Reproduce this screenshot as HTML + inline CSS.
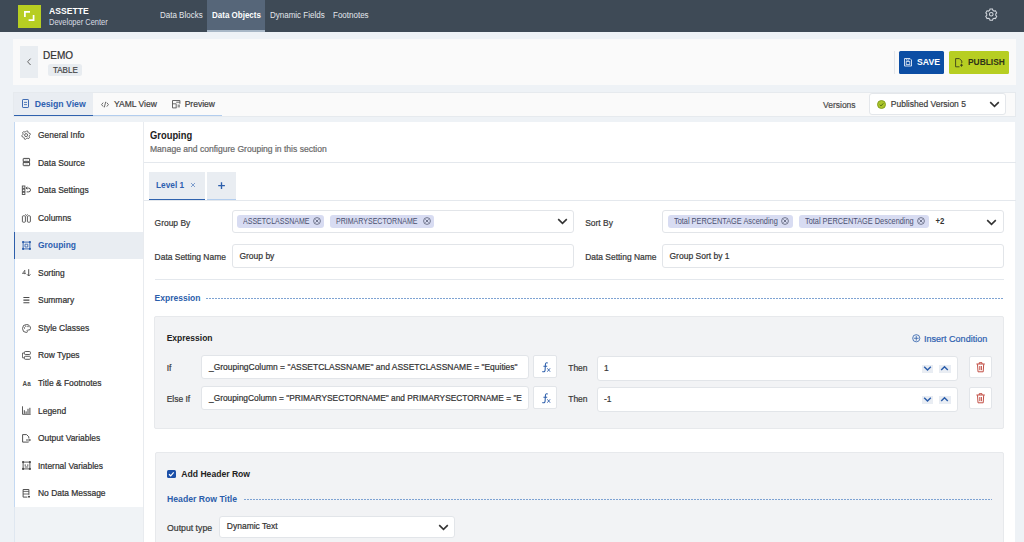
<!DOCTYPE html>
<html><head><meta charset="utf-8">
<style>
*{box-sizing:border-box;margin:0;padding:0}
html,body{width:1024px;height:542px;overflow:hidden;background:#eef2f6;font-family:"Liberation Sans",sans-serif;color:#333}
.a{position:absolute}
.t{position:absolute;white-space:nowrap;line-height:1;-webkit-text-stroke:0.2px currentColor}
svg{position:absolute;overflow:visible}
</style></head><body>
<div class="a" style="left:0px;top:0px;width:1024px;height:32px;background:#3e4a56"></div>
<div class="a" style="left:18px;top:5px;width:23px;height:22.5px;background:#b7ce22"></div>
<svg style="left:0px;top:0px" width="60" height="32"><path d="M24.9 17V11.9H30M28.6 20.2H33.6V15" fill="none" stroke="#fff" stroke-width="1.7"/></svg>
<div class="t" style="left:49px;top:7.00px;font-size:8.6px;color:#fff;font-weight:bold;-webkit-text-stroke:0;transform:scaleY(1.09);transform-origin:0 7.28px;">ASSETTE</div>
<div class="t" style="left:49px;top:19.00px;font-size:7.5px;color:#d9dde3;transform:scaleY(1.09);transform-origin:0 6.35px;-webkit-text-stroke:0;">Developer Center</div>
<div class="a" style="left:207px;top:0px;width:58px;height:32px;background:#566679;border-bottom:2px solid #a8b7c6"></div>
<div class="t" style="left:160px;top:12.00px;font-size:8px;color:#e4e8ec;transform:scaleY(1.14);transform-origin:0 6.77px;-webkit-text-stroke:0;">Data Blocks</div>
<div class="t" style="left:212px;top:12.00px;font-size:8px;color:#fff;font-weight:bold;-webkit-text-stroke:0;transform:scaleY(1.14);transform-origin:0 6.77px;">Data Objects</div>
<div class="t" style="left:270px;top:12.00px;font-size:8px;color:#e4e8ec;transform:scaleY(1.14);transform-origin:0 6.77px;-webkit-text-stroke:0;">Dynamic Fields</div>
<div class="t" style="left:333px;top:12.00px;font-size:8px;color:#e4e8ec;transform:scaleY(1.14);transform-origin:0 6.77px;-webkit-text-stroke:0;">Footnotes</div>
<svg style="left:985px;top:8px" width="12.5" height="12.5" viewBox="0 0 24 24"><path d="M9.6 2h4.8l.8 2.6 2.3 1.3 2.6-.6 2.4 4.2-1.9 2v2.6l1.9 2-2.4 4.2-2.6-.6-2.3 1.3-.8 2.6H9.6l-.8-2.6-2.3-1.3-2.6.6-2.4-4.2 1.9-2v-2.6l-1.9-2 2.4-4.2 2.6.6 2.3-1.3z" fill="none" stroke="#d3d8de" stroke-width="2"/><circle cx="12" cy="12" r="3.5" fill="none" stroke="#d3d8de" stroke-width="2"/></svg>
<div class="a" style="left:13px;top:39px;width:1003px;height:46px;background:#fafafa"></div>
<div class="a" style="left:20px;top:46px;width:18px;height:32px;background:#e9edf1"></div>
<svg style="left:20px;top:46px" width="18" height="32"><path d="M10.6 12.6L7.6 15.8 10.6 19" fill="none" stroke="#666" stroke-width="1"/></svg>
<div class="t" style="left:43px;top:51.00px;font-size:10px;color:#333;transform:scaleY(1.09);transform-origin:0 8.46px;">DEMO</div>
<div class="a" style="left:48px;top:64px;width:34px;height:12px;background:#e8ecf0;border-radius:2.5px"></div>
<div class="t" style="left:52.6px;top:66.00px;font-size:8.6px;color:#444;transform:scaleY(1.09) scaleX(0.93);transform-origin:0 7.28px;">TABLE</div>
<div class="a" style="left:893.5px;top:51px;width:1px;height:23px;background:#e3e6ea"></div>
<div class="a" style="left:899px;top:51px;width:45px;height:23px;background:#0c4ea4;border-radius:1.5px"></div>
<svg style="left:903.5px;top:58px" width="8" height="8.5"><path d="M0.5 0.5H6L7.5 2V8H0.5Z" fill="none" stroke="#e4ebf6" stroke-width="0.9"/><rect x="2.2" y="3.6" width="3.6" height="2.8" fill="none" stroke="#e4ebf6" stroke-width="0.8"/><path d="M2.4 0.8V2.2H5V0.8" fill="none" stroke="#e4ebf6" stroke-width="0.7"/></svg>
<div class="t" style="left:917px;top:58.00px;font-size:8.7px;color:#fff;font-weight:bold;-webkit-text-stroke:0;transform:scaleY(1.09);transform-origin:0 7.36px;">SAVE</div>
<div class="a" style="left:949px;top:51px;width:60px;height:23px;background:#b7ce22;border-radius:1.5px"></div>
<svg style="left:955px;top:57.5px" width="8" height="9.5"><path d="M4.5 8.8H0.6V0.6H4.4L6.8 3V5" fill="none" stroke="#3b401c" stroke-width="0.9"/><path d="M5 7.2H8M6.5 5.7V8.7" stroke="#3b401c" stroke-width="0.9"/></svg>
<div class="t" style="left:968px;top:58.00px;font-size:8.4px;color:#2f3318;font-weight:bold;-webkit-text-stroke:0;transform:scaleY(1.09);transform-origin:0 7.11px;">PUBLISH</div>
<div class="a" style="left:13px;top:92px;width:1002.5px;height:24.5px;background:#fafafa;border:1px solid #e6eaee"></div>
<div class="a" style="left:14px;top:93px;width:79px;height:23px;background:#e9edf2;border-bottom:1.5px solid #2f62ae"></div>
<div class="a" style="left:93px;top:114.6px;width:129px;height:1.2px;background:#b2cdee"></div>
<svg style="left:22px;top:98.5px" width="7" height="9"><rect x="0.5" y="0.5" width="6" height="8" rx="0.6" fill="none" stroke="#2c5eab" stroke-width="0.9"/><path d="M2 3.4H5M2 5.6H5" stroke="#2c5eab" stroke-width="0.8"/></svg>
<div class="t" style="left:34.7px;top:100.00px;font-size:8.7px;color:#2d60b0;font-weight:bold;-webkit-text-stroke:0;transform:scaleY(1.09);transform-origin:0 7.36px;">Design View</div>
<svg style="left:100.5px;top:100.5px" width="8" height="7"><path d="M2.2 1.6L0.6 3.6 2.2 5.6M5.8 1.6L7.4 3.6 5.8 5.6M4.7 0.8L3.3 6.4" fill="none" stroke="#555" stroke-width="0.85"/></svg>
<div class="t" style="left:114px;top:100.00px;font-size:8.5px;color:#3d3d3d;transform:scaleY(1.09);transform-origin:0 7.20px;">YAML View</div>
<svg style="left:171.8px;top:99.8px" width="8.5" height="8.5"><path d="M4.5 7.9H0.5V0.5H7.9V3.8" fill="none" stroke="#555" stroke-width="0.9"/><path d="M0.5 3.8H4.2V7.9M4.2 2.2H7.9M5.6 5.2H8M5.6 6.8H8" fill="none" stroke="#555" stroke-width="0.85"/></svg>
<div class="t" style="left:184.7px;top:100.00px;font-size:8.5px;color:#3d3d3d;transform:scaleY(1.09);transform-origin:0 7.20px;">Preview</div>
<div class="t" style="left:823px;top:101.00px;font-size:8.5px;color:#4a4a4a;transform:scaleY(1.09);transform-origin:0 7.20px;">Versions</div>
<div class="a" style="left:869px;top:93px;width:137px;height:22.4px;background:#fff;border:1px solid #e4e7eb;border-radius:3px"></div>
<svg style="left:876.8px;top:99.8px" width="9" height="9"><circle cx="4.5" cy="4.5" r="4" fill="#abc52a" stroke="#7f9a1a" stroke-width="0.9"/><path d="M2.8 4.7L4 5.9 6.3 3.4" fill="none" stroke="#4a6212" stroke-width="0.9"/></svg>
<div class="t" style="left:890.8px;top:100.00px;font-size:8.5px;color:#3d3d3d;transform:scaleY(1.09);transform-origin:0 7.20px;">Published Version 5</div>
<svg style="left:988.6px;top:100.8px" width="11" height="7"><path d="M1.2 1.2L5.5 5.3 9.8 1.2" fill="none" stroke="#333" stroke-width="1.6"/></svg>
<div class="a" style="left:14px;top:507px;width:128.5px;height:35px;background:#f0f3f6;border-left:1px solid #dfe7f0"></div>
<div class="a" style="left:14px;top:121.5px;width:128.5px;height:385.5px;background:#fff;border-left:1px solid #c4d9f2"></div>
<svg style="left:22px;top:130.8px" width="9" height="9"><path d="M4.66 -0.16 L5.75 0.13 L6.11 1.48 L6.72 2.09 L8.07 2.45 L8.36 3.54 L7.37 4.53 L7.15 5.36 L7.51 6.72 L6.72 7.51 L5.36 7.15 L4.53 7.37 L3.54 8.36 L2.45 8.07 L2.09 6.72 L1.48 6.11 L0.13 5.75 L-0.16 4.66 L0.83 3.67 L1.05 2.84 L0.69 1.48 L1.48 0.69 L2.84 1.05 L3.67 0.83Z" fill="none" stroke="#4a4a4a" stroke-width="0.85" stroke-linejoin="round"/><circle cx="4.1" cy="4.1" r="1.5" fill="none" stroke="#4a4a4a" stroke-width="0.85"/></svg>
<div class="t" style="left:38px;top:131.00px;font-size:8.45px;color:#303030;transform:scaleY(1.09);transform-origin:0 7.15px;">General Info</div>
<svg style="left:22px;top:158.4px" width="9" height="9"><rect x="1.2" y="0.4" width="6.4" height="3.3" rx="0.5" fill="none" stroke="#4a4a4a" stroke-width="1"/><rect x="1.2" y="4.4" width="6.4" height="3.3" rx="0.5" fill="none" stroke="#4a4a4a" stroke-width="1"/><path d="M1.6 3.4V4.7M7.2 3.4V4.7" stroke="#4a4a4a" stroke-width="1.3"/><path d="M2.6 2.1H6.2M2.6 6H6.2" stroke="#4a4a4a" stroke-width="0.6" opacity="0.6"/></svg>
<div class="t" style="left:38px;top:159.00px;font-size:8.45px;color:#303030;transform:scaleY(1.09);transform-origin:0 7.15px;">Data Source</div>
<svg style="left:22px;top:185.9px" width="9" height="9"><rect x="0.3" y="0" width="2.6" height="2.3" fill="none" stroke="#4a4a4a" stroke-width="0.9"/><rect x="0.3" y="3.1" width="2.6" height="2.3" fill="none" stroke="#4a4a4a" stroke-width="0.9"/><rect x="0.3" y="6.2" width="2.6" height="2.3" fill="none" stroke="#4a4a4a" stroke-width="0.9"/><path d="M4.4 2.1H6.6A1.9 1.9 0 0 1 6.6 5.9H4.6" fill="none" stroke="#4a4a4a" stroke-width="0.95"/><path d="M5.3 0.9L4 2.1 5.3 3.3" fill="none" stroke="#4a4a4a" stroke-width="0.95"/></svg>
<div class="t" style="left:38px;top:186.00px;font-size:8.45px;color:#303030;transform:scaleY(1.09);transform-origin:0 7.15px;">Data Settings</div>
<svg style="left:22px;top:213.5px" width="9" height="9"><rect x="0.4" y="1.8" width="3" height="6.4" rx="0.8" fill="none" stroke="#4a4a4a" stroke-width="0.9"/><rect x="5.4" y="1.8" width="3" height="6.4" rx="0.8" fill="none" stroke="#4a4a4a" stroke-width="0.9"/><path d="M3.2 0.4L4.4 1.5 5.6 0.4" fill="none" stroke="#4a4a4a" stroke-width="0.9"/></svg>
<div class="t" style="left:38px;top:214.00px;font-size:8.45px;color:#303030;transform:scaleY(1.09);transform-origin:0 7.15px;">Columns</div>
<div class="a" style="left:14px;top:232px;width:128.5px;height:26.8px;background:#e9edf2;border-left:1.5px solid #2c5eab"></div>
<svg style="left:22px;top:241.0px" width="9" height="9"><rect x="1.1" y="1.1" width="6.8" height="6.8" fill="none" stroke="#2c5eab" stroke-width="0.9"/><circle cx="1.1" cy="1.1" r="1.1" fill="#2c5eab"/><circle cx="7.9" cy="1.1" r="1.1" fill="#2c5eab"/><circle cx="1.1" cy="7.9" r="1.1" fill="#2c5eab"/><circle cx="7.9" cy="7.9" r="1.1" fill="#2c5eab"/><path d="M3 3.2H5.8V6H3Z" fill="none" stroke="#2c5eab" stroke-width="0.8"/></svg>
<div class="t" style="left:38px;top:241.00px;font-size:8.45px;color:#2d60b0;font-weight:bold;-webkit-text-stroke:0;transform:scaleY(1.09);transform-origin:0 7.15px;">Grouping</div>
<svg style="left:22px;top:268.6px" width="9" height="9"><path d="M6.7 0.2V6.8M5 5.3L6.7 7 8.4 5.3" fill="none" stroke="#4a4a4a" stroke-width="0.95"/><path d="M0.5 4.6L2.8 1.2V5.2M0.5 4.4H3.9" fill="none" stroke="#4a4a4a" stroke-width="0.75"/></svg>
<div class="t" style="left:38px;top:269.00px;font-size:8.45px;color:#303030;transform:scaleY(1.09);transform-origin:0 7.15px;">Sorting</div>
<svg style="left:22px;top:296.1px" width="9" height="9"><path d="M1.4 1.5H7.4M1.4 4.1H7.4M1.4 6.7H7.4" stroke="#4a4a4a" stroke-width="1.05"/></svg>
<div class="t" style="left:38px;top:296.00px;font-size:8.45px;color:#303030;transform:scaleY(1.09);transform-origin:0 7.15px;">Summary</div>
<svg style="left:22px;top:323.7px" width="9" height="9"><path d="M4.5 0.5a4 4 0 1 0 0 8c.8 0 1.1-.6.7-1.2-.4-.6 0-1.3.7-1.3h1a1.6 1.6 0 0 0 1.6-1.6A4 3.8 0 0 0 4.5 0.5z" fill="none" stroke="#4a4a4a" stroke-width="0.9"/><circle cx="2.5" cy="4" r="0.65" fill="#4a4a4a"/><circle cx="3.8" cy="2.2" r="0.65" fill="#4a4a4a"/><circle cx="6" cy="2.5" r="0.65" fill="#4a4a4a"/></svg>
<div class="t" style="left:38px;top:324.00px;font-size:8.45px;color:#303030;transform:scaleY(1.09);transform-origin:0 7.15px;">Style Classes</div>
<svg style="left:22px;top:351.2px" width="9" height="9"><rect x="2.4" y="0.5" width="6" height="3" rx="0.9" fill="none" stroke="#4a4a4a" stroke-width="0.9"/><rect x="2.4" y="5.3" width="6" height="3" rx="0.9" fill="none" stroke="#4a4a4a" stroke-width="0.9"/><path d="M0.5 2H2.4M0.5 2V6.8H2.4" fill="none" stroke="#4a4a4a" stroke-width="0.8"/></svg>
<div class="t" style="left:38px;top:351.00px;font-size:8.45px;color:#303030;transform:scaleY(1.09);transform-origin:0 7.15px;">Row Types</div>
<svg style="left:22px;top:378.8px" width="9" height="9"><text x="0.6" y="7" font-family="Liberation Sans" font-size="6.3" font-weight="bold" fill="#4a4a4a">Aa</text></svg>
<div class="t" style="left:38px;top:379.00px;font-size:8.45px;color:#303030;transform:scaleY(1.09);transform-origin:0 7.15px;">Title &amp; Footnotes</div>
<svg style="left:22px;top:406.3px" width="9" height="9"><path d="M0.5 0.3V8.3H8.7" fill="none" stroke="#4a4a4a" stroke-width="0.9"/><path d="M2.3 7.8V4.2M4.1 7.8V5.4M6 7.8V2.8M7.9 7.8V1.8" stroke="#4a4a4a" stroke-width="1"/></svg>
<div class="t" style="left:38px;top:407.00px;font-size:8.45px;color:#303030;transform:scaleY(1.09);transform-origin:0 7.15px;">Legend</div>
<svg style="left:22px;top:433.9px" width="9" height="9"><path d="M6.6 8.1H0.6V0.6H4.6L6.8 2.8V4.2" fill="none" stroke="#4a4a4a" stroke-width="0.95"/><path d="M4 6H8.4M7 4.6L8.4 6 7 7.4" fill="none" stroke="#4a4a4a" stroke-width="0.9"/></svg>
<div class="t" style="left:38px;top:434.00px;font-size:8.45px;color:#303030;transform:scaleY(1.09);transform-origin:0 7.15px;">Output Variables</div>
<svg style="left:22px;top:461.4px" width="9" height="9"><rect x="1.1" y="1.1" width="6.8" height="6.8" fill="none" stroke="#4a4a4a" stroke-width="0.9"/><circle cx="1.1" cy="1.1" r="1.1" fill="#4a4a4a"/><circle cx="7.9" cy="1.1" r="1.1" fill="#4a4a4a"/><circle cx="1.1" cy="7.9" r="1.1" fill="#4a4a4a"/><circle cx="7.9" cy="7.9" r="1.1" fill="#4a4a4a"/><path d="M3.2 3.3V5.2M5.8 3.3V5.2M2.8 6H6.2" stroke="#4a4a4a" stroke-width="0.85"/></svg>
<div class="t" style="left:38px;top:462.00px;font-size:8.45px;color:#303030;transform:scaleY(1.09);transform-origin:0 7.15px;">Internal Variables</div>
<svg style="left:22px;top:489.0px" width="9" height="9"><path d="M6.9 5.8V0.5H1.1V8.1H5.4" fill="none" stroke="#4a4a4a" stroke-width="0.95"/><path d="M1.1 2.4H6.9M1.1 5H6.9" stroke="#4a4a4a" stroke-width="0.8"/><rect x="6" y="6.9" width="2" height="1.6" fill="#4a4a4a"/></svg>
<div class="t" style="left:38px;top:489.00px;font-size:8.45px;color:#303030;transform:scaleY(1.09);transform-origin:0 7.15px;">No Data Message</div>
<div class="a" style="left:142.5px;top:122px;width:872.5px;height:420px;background:#fff;border-left:1px solid #e8ebef"></div>
<div class="t" style="left:150px;top:131.00px;font-size:9.4px;color:#222;font-weight:bold;-webkit-text-stroke:0;transform:scaleY(1.09);transform-origin:0 7.96px;">Grouping</div>
<div class="t" style="left:150px;top:145.00px;font-size:8.56px;color:#6a6a6a;transform:scaleY(1.09);transform-origin:0 7.25px;">Manage and configure Grouping in this section</div>
<div class="a" style="left:143.5px;top:162px;width:872px;height:1px;background:#e4e8ed"></div>
<div class="a" style="left:149px;top:171.5px;width:55.5px;height:28.8px;background:#e9edf2;border-bottom:1.5px solid #2f62ae"></div>
<div class="t" style="left:156px;top:181.00px;font-size:8.3px;color:#2d60b0;font-weight:bold;-webkit-text-stroke:0;transform:scaleY(1.09);transform-origin:0 7.03px;">Level 1</div>
<svg style="left:189.5px;top:182.3px" width="6" height="6"><path d="M1 1L5 5M5 1L1 5" stroke="#6b8fc6" stroke-width="0.85"/></svg>
<div class="a" style="left:207px;top:171.5px;width:28.5px;height:28.8px;background:#e9edf2;border-bottom:1.3px solid #b2cdee"></div>
<svg style="left:217px;top:181.2px" width="9" height="9"><path d="M4.5 1.2V7.9M1.2 4.6H7.9" stroke="#2c5eab" stroke-width="1.35"/></svg>
<div class="a" style="left:143.5px;top:200px;width:872px;height:1px;background:#e4e8ed"></div>
<div class="t" style="left:154.6px;top:219.00px;font-size:8.45px;color:#383838;transform:scaleY(1.09);transform-origin:0 7.15px;">Group By</div>
<div class="a" style="left:232px;top:210px;width:342px;height:23px;background:#fff;border:1px solid #e2e5e9;border-radius:3px"></div>
<div class="a" style="left:237.3px;top:215px;width:86.6px;height:12.8px;background:#d8dcf2;border-radius:3px"></div>
<div class="t" style="left:243.3px;top:218.00px;font-size:8px;color:#4a5070;transform:scaleY(1.09) scaleX(0.88);transform-origin:0 6.77px;-webkit-text-stroke:0;">ASSETCLASSNAME</div>
<svg style="left:313.3px;top:217.2px" width="8" height="8"><circle cx="4" cy="4" r="3.4" fill="none" stroke="#50556e" stroke-width="0.75"/><path d="M2.4 2.4L5.6 5.6M5.6 2.4L2.4 5.6" stroke="#50556e" stroke-width="0.75"/></svg>
<div class="a" style="left:330.1px;top:215px;width:103.5px;height:12.8px;background:#d8dcf2;border-radius:3px"></div>
<div class="t" style="left:336.3px;top:218.00px;font-size:8px;color:#4a5070;transform:scaleY(1.09) scaleX(0.88);transform-origin:0 6.77px;-webkit-text-stroke:0;">PRIMARYSECTORNAME</div>
<svg style="left:422.6px;top:217.2px" width="8" height="8"><circle cx="4" cy="4" r="3.4" fill="none" stroke="#50556e" stroke-width="0.75"/><path d="M2.4 2.4L5.6 5.6M5.6 2.4L2.4 5.6" stroke="#50556e" stroke-width="0.75"/></svg>
<svg style="left:556.5px;top:218.3px" width="11" height="7"><path d="M1.2 1.2L5.5 5.3 9.8 1.2" fill="none" stroke="#333" stroke-width="1.6"/></svg>
<div class="t" style="left:585.2px;top:219.00px;font-size:8.45px;color:#383838;transform:scaleY(1.09);transform-origin:0 7.15px;">Sort By</div>
<div class="a" style="left:662px;top:210px;width:342px;height:23px;background:#fff;border:1px solid #e2e5e9;border-radius:3px"></div>
<div class="a" style="left:667.9px;top:215px;width:124.8px;height:12.8px;background:#d8dcf2;border-radius:3px"></div>
<div class="t" style="left:673.8px;top:218.00px;font-size:8px;color:#4a5070;transform:scaleY(1.09) scaleX(0.92);transform-origin:0 6.77px;-webkit-text-stroke:0;">Total PERCENTAGE Ascending</div>
<svg style="left:781.3px;top:217.2px" width="8" height="8"><circle cx="4" cy="4" r="3.4" fill="none" stroke="#50556e" stroke-width="0.75"/><path d="M2.4 2.4L5.6 5.6M5.6 2.4L2.4 5.6" stroke="#50556e" stroke-width="0.75"/></svg>
<div class="a" style="left:799.2px;top:215px;width:129.5px;height:12.8px;background:#d8dcf2;border-radius:3px"></div>
<div class="t" style="left:805px;top:218.00px;font-size:8px;color:#4a5070;transform:scaleY(1.09) scaleX(0.92);transform-origin:0 6.77px;-webkit-text-stroke:0;">Total PERCENTAGE Descending</div>
<svg style="left:917.3px;top:217.2px" width="8" height="8"><circle cx="4" cy="4" r="3.4" fill="none" stroke="#50556e" stroke-width="0.75"/><path d="M2.4 2.4L5.6 5.6M5.6 2.4L2.4 5.6" stroke="#50556e" stroke-width="0.75"/></svg>
<div class="t" style="left:935.4px;top:218.00px;font-size:7.8px;color:#333;font-weight:bold;-webkit-text-stroke:0;transform:scaleY(1.09);transform-origin:0 6.60px;">+2</div>
<svg style="left:986px;top:218.5px" width="11" height="7"><path d="M1.2 1.2L5.5 5.3 9.8 1.2" fill="none" stroke="#333" stroke-width="1.6"/></svg>
<div class="t" style="left:154.6px;top:253.00px;font-size:8.45px;color:#383838;transform:scaleY(1.09);transform-origin:0 7.15px;">Data Setting Name</div>
<div class="a" style="left:232px;top:244px;width:342px;height:23.5px;background:#fff;border:1px solid #e2e5e9;border-radius:3px"></div>
<div class="t" style="left:239.4px;top:252.00px;font-size:8.5px;color:#333;transform:scaleY(1.09);transform-origin:0 7.20px;">Group by</div>
<div class="t" style="left:585.2px;top:253.00px;font-size:8.45px;color:#383838;transform:scaleY(1.09);transform-origin:0 7.15px;">Data Setting Name</div>
<div class="a" style="left:662px;top:244px;width:342px;height:23.5px;background:#fff;border:1px solid #e2e5e9;border-radius:3px"></div>
<div class="t" style="left:669.5px;top:252.00px;font-size:8.5px;color:#333;transform:scaleY(1.09);transform-origin:0 7.20px;">Group Sort by 1</div>
<div class="a" style="left:154.6px;top:279px;width:849px;height:1px;background:#e4e8ed"></div>
<div class="t" style="left:154.6px;top:294.00px;font-size:8.5px;color:#2c5eab;font-weight:bold;-webkit-text-stroke:0;transform:scaleY(1.09);transform-origin:0 7.20px;">Expression</div>
<div class="a" style="left:206px;top:298px;width:797.5px;height:1px;background:repeating-linear-gradient(90deg,#7ea3d3 0 2px,transparent 2px 3px)"></div>
<div class="a" style="left:154.3px;top:316px;width:849.3px;height:113.3px;background:#f2f3f5;border:1px solid #e7e9ec;border-radius:2px"></div>
<div class="t" style="left:166.7px;top:334.00px;font-size:8.5px;color:#222;font-weight:bold;-webkit-text-stroke:0;transform:scaleY(1.09);transform-origin:0 7.20px;">Expression</div>
<svg style="left:912.3px;top:334.3px" width="8.5" height="8.5"><circle cx="4.25" cy="4.25" r="3.6" fill="none" stroke="#2c5eab" stroke-width="0.8"/><path d="M4.25 1.8V6.7M1.8 4.25H6.7" stroke="#2c5eab" stroke-width="0.8"/></svg>
<div class="t" style="left:923.9px;top:335.00px;font-size:9.05px;color:#2d60b0;transform:scaleY(1.09);transform-origin:0 7.66px;">Insert Condition</div>
<div class="t" style="left:166.7px;top:364.00px;font-size:8.45px;color:#383838;transform:scaleY(1.09);transform-origin:0 7.15px;">If</div>
<div class="a" style="left:201px;top:355px;width:327.5px;height:23.5px;background:#fff;border:1px solid #e2e5e9;border-radius:3px"></div>
<div class="t" style="left:209px;top:363.00px;font-size:8.47px;color:#333;transform:scaleY(1.09);transform-origin:0 7.17px;">_GroupingColumn = "ASSETCLASSNAME" and ASSETCLASSNAME = "Equities"</div>
<div class="a" style="left:533px;top:355px;width:23.5px;height:23px;background:#fff;border:1px solid #e2e5e9;border-radius:2px"></div>
<svg style="left:541px;top:362.3px" width="10" height="11"><path d="M6.8 1.1C5.6 0.2 4.5 0.9 4.4 2.5L4.1 8.1C4 9.7 2.6 10.2 1.3 9.5M2.4 4.3H6.2" fill="none" stroke="#2c5eab" stroke-width="1.05"/><path d="M6.3 6.3L9.1 9.7M9.1 6.3L6.3 9.7" stroke="#2c5eab" stroke-width="0.9"/></svg>
<div class="t" style="left:568.2px;top:364.00px;font-size:8.5px;color:#383838;transform:scaleY(1.09);transform-origin:0 7.20px;">Then</div>
<div class="a" style="left:596.5px;top:355.5px;width:361px;height:25px;background:#fff;border:1px solid #e2e5e9;border-radius:3px"></div>
<div class="t" style="left:604px;top:364.00px;font-size:8.5px;color:#383838;transform:scaleY(1.09);transform-origin:0 7.20px;">1</div>
<div class="a" style="left:922px;top:364.5px;width:11.2px;height:8px;background:#e9edf3"></div>
<svg style="left:922px;top:363.7px" width="11" height="9"><path d="M2.2 2.8L5.5 6 8.8 2.8" fill="none" stroke="#2c5eab" stroke-width="1.5"/></svg>
<div class="a" style="left:939.4px;top:364.5px;width:11.2px;height:8px;background:#e9edf3"></div>
<svg style="left:939.4px;top:363.7px" width="11" height="9"><path d="M2.2 6L5.5 2.8 8.8 6" fill="none" stroke="#2c5eab" stroke-width="1.5"/></svg>
<div class="a" style="left:969.4px;top:355.6px;width:22.8px;height:22.5px;background:#fff;border:1px solid #e2e5e9;border-radius:2px"></div>
<svg style="left:976px;top:361.8px" width="9.5" height="10.5"><path d="M0.4 2H8.8M3.2 2V0.7H6V2M1.5 2.2L2 9.8H7.2L7.7 2.2M3.8 4V8.2M5.4 4V8.2" fill="none" stroke="#c24f45" stroke-width="1"/></svg>
<div class="t" style="left:166.7px;top:395.00px;font-size:8.45px;color:#383838;transform:scaleY(1.09);transform-origin:0 7.15px;">Else If</div>
<div class="a" style="left:201px;top:386px;width:327.5px;height:23.5px;background:#fff;border:1px solid #e2e5e9;border-radius:3px"></div>
<div class="t" style="left:209px;top:394.00px;font-size:8.35px;color:#333;transform:scaleY(1.09);transform-origin:0 7.07px;">_GroupingColumn = "PRIMARYSECTORNAME" and PRIMARYSECTORNAME = "E</div>
<div class="a" style="left:533px;top:386px;width:23.5px;height:23px;background:#fff;border:1px solid #e2e5e9;border-radius:2px"></div>
<svg style="left:541px;top:393.3px" width="10" height="11"><path d="M6.8 1.1C5.6 0.2 4.5 0.9 4.4 2.5L4.1 8.1C4 9.7 2.6 10.2 1.3 9.5M2.4 4.3H6.2" fill="none" stroke="#2c5eab" stroke-width="1.05"/><path d="M6.3 6.3L9.1 9.7M9.1 6.3L6.3 9.7" stroke="#2c5eab" stroke-width="0.9"/></svg>
<div class="t" style="left:568.2px;top:395.00px;font-size:8.5px;color:#383838;transform:scaleY(1.09);transform-origin:0 7.20px;">Then</div>
<div class="a" style="left:596.5px;top:386.5px;width:361px;height:25px;background:#fff;border:1px solid #e2e5e9;border-radius:3px"></div>
<div class="t" style="left:604px;top:395.00px;font-size:8.5px;color:#383838;transform:scaleY(1.09);transform-origin:0 7.20px;">-1</div>
<div class="a" style="left:922px;top:395.5px;width:11.2px;height:8px;background:#e9edf3"></div>
<svg style="left:922px;top:394.7px" width="11" height="9"><path d="M2.2 2.8L5.5 6 8.8 2.8" fill="none" stroke="#2c5eab" stroke-width="1.5"/></svg>
<div class="a" style="left:939.4px;top:395.5px;width:11.2px;height:8px;background:#e9edf3"></div>
<svg style="left:939.4px;top:394.7px" width="11" height="9"><path d="M2.2 6L5.5 2.8 8.8 6" fill="none" stroke="#2c5eab" stroke-width="1.5"/></svg>
<div class="a" style="left:969.4px;top:386.6px;width:22.8px;height:22.5px;background:#fff;border:1px solid #e2e5e9;border-radius:2px"></div>
<svg style="left:976px;top:392.8px" width="9.5" height="10.5"><path d="M0.4 2H8.8M3.2 2V0.7H6V2M1.5 2.2L2 9.8H7.2L7.7 2.2M3.8 4V8.2M5.4 4V8.2" fill="none" stroke="#c24f45" stroke-width="1"/></svg>
<div class="a" style="left:154.7px;top:452.2px;width:849px;height:100px;background:#f2f3f5;border:1px solid #e7e9ec;border-radius:2px"></div>
<div class="a" style="left:167px;top:469.8px;width:8.5px;height:8.2px;background:#1c50a8;border-radius:1.5px"></div>
<svg style="left:167px;top:469.8px" width="9" height="8"><path d="M2 4.2L3.7 5.8 6.7 2.4" fill="none" stroke="#fff" stroke-width="1.2"/></svg>
<div class="t" style="left:181.3px;top:470.00px;font-size:8.6px;color:#222;font-weight:bold;-webkit-text-stroke:0;transform:scaleY(1.09);transform-origin:0 7.28px;">Add Header Row</div>
<div class="t" style="left:167px;top:495.00px;font-size:8.66px;color:#2c5eab;font-weight:bold;-webkit-text-stroke:0;transform:scaleY(1.09);transform-origin:0 7.33px;">Header Row Title</div>
<div class="a" style="left:243.7px;top:499px;width:748px;height:1px;background:repeating-linear-gradient(90deg,#7ea3d3 0 2px,transparent 2px 3px)"></div>
<div class="t" style="left:167px;top:524.00px;font-size:8.72px;color:#383838;transform:scaleY(1.09);transform-origin:0 7.38px;">Output type</div>
<div class="a" style="left:218.9px;top:515.6px;width:236.3px;height:22px;background:#fff;border:1px solid #e2e5e9;border-radius:3px"></div>
<div class="t" style="left:226.8px;top:522.00px;font-size:8.5px;color:#333;transform:scaleY(1.09);transform-origin:0 7.20px;">Dynamic Text</div>
<svg style="left:438.2px;top:523.5px" width="11" height="7"><path d="M1.2 1.2L5.5 5.3 9.8 1.2" fill="none" stroke="#333" stroke-width="1.6"/></svg>
</body></html>
